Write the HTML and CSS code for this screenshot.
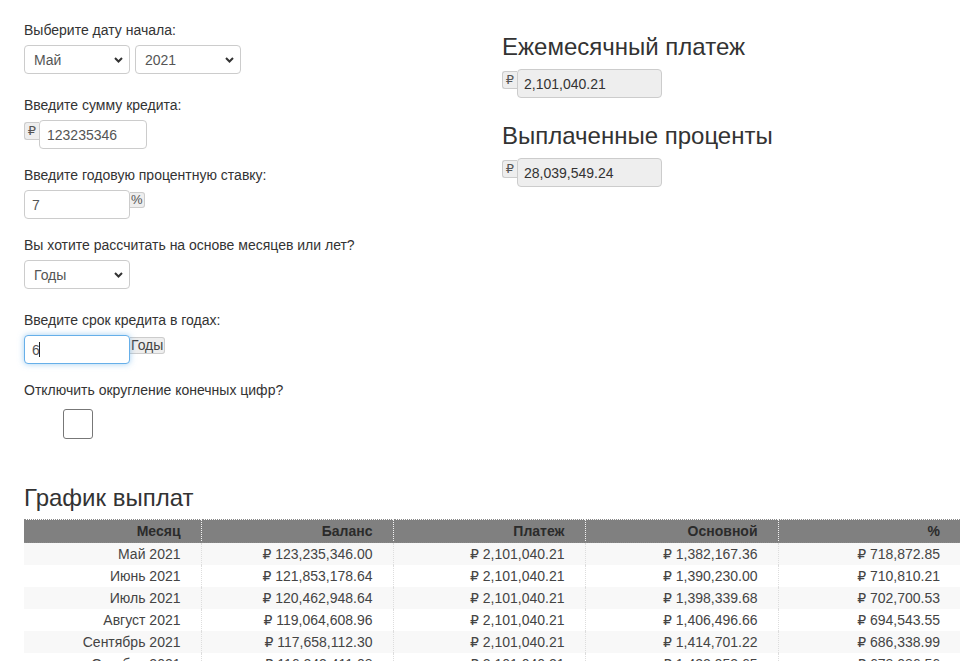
FILE: index.html
```html
<!DOCTYPE html>
<html lang="ru">
<head>
<meta charset="utf-8">
<title>Кредитный калькулятор</title>
<link rel="stylesheet" href="styles.css">
</head>
<body>
<div class="page">
  <div class="top">
    <div class="left">
      <div class="group gsel">
        <div class="lbl">Выберите дату начала:</div>
        <div class="fieldrow">
          <span class="selwrap"><select class="sel"><option>Май</option></select><svg class="chev" width="9" height="6" viewBox="0 0 9 6"><path d="M1 1 L4.5 4.5 L8 1" fill="none" stroke="#333" stroke-width="2"/></svg></span>
          <span class="selwrap"><select class="sel"><option>2021</option></select><svg class="chev" width="9" height="6" viewBox="0 0 9 6"><path d="M1 1 L4.5 4.5 L8 1" fill="none" stroke="#333" stroke-width="2"/></svg></span>
        </div>
      </div>
      <div class="group">
        <div class="lbl">Введите сумму кредита:</div>
        <div class="fieldrow">
          <span class="addon pre rub">₽</span><input class="inp w108" type="text" value="123235346">
        </div>
      </div>
      <div class="group">
        <div class="lbl">Введите годовую процентную ставку:</div>
        <div class="fieldrow">
          <input class="inp w106" type="text" value="7"><span class="addon post">%</span>
        </div>
      </div>
      <div class="group gsel">
        <div class="lbl">Вы хотите рассчитать на основе месяцев или лет?</div>
        <div class="fieldrow">
          <span class="selwrap"><select class="sel"><option>Годы</option></select><svg class="chev" width="9" height="6" viewBox="0 0 9 6"><path d="M1 1 L4.5 4.5 L8 1" fill="none" stroke="#333" stroke-width="2"/></svg></span>
        </div>
      </div>
      <div class="group">
        <div class="lbl">Введите срок кредита в годах:</div>
        <div class="fieldrow">
          <span class="caretwrap"><input class="inp w106 focus" type="text" value="6"><span class="caret"></span></span><span class="addon post words">Годы</span>
        </div>
      </div>
      <div class="group last">
        <div class="lbl chklbl">Отключить округление конечных цифр?</div>
        <div class="chk"></div>
      </div>
    </div>
    <div class="right">
      <h2 class="rh">Ежемесячный платеж</h2>
      <div class="fieldrow">
        <span class="addon pre rub">₽</span><input class="inp ro w145" type="text" value="2,101,040.21" readonly>
      </div>
      <h2 class="rh second">Выплаченные проценты</h2>
      <div class="fieldrow">
        <span class="addon pre rub">₽</span><input class="inp ro w145" type="text" value="28,039,549.24" readonly>
      </div>
    </div>
  </div>

  <h2 class="sched">График выплат</h2>
  <div class="tablewrap">
  <table class="tbl">
    <colgroup>
      <col class="c1"><col class="c2"><col class="c3"><col class="c4"><col class="c5">
    </colgroup>
    <thead>
      <tr><th>Месяц</th><th>Баланс</th><th>Платеж</th><th>Основной</th><th>%</th></tr>
    </thead>
    <tbody>
      <tr><td>Май 2021</td><td>₽ 123,235,346.00</td><td>₽ 2,101,040.21</td><td>₽ 1,382,167.36</td><td>₽ 718,872.85</td></tr>
      <tr><td>Июнь 2021</td><td>₽ 121,853,178.64</td><td>₽ 2,101,040.21</td><td>₽ 1,390,230.00</td><td>₽ 710,810.21</td></tr>
      <tr><td>Июль 2021</td><td>₽ 120,462,948.64</td><td>₽ 2,101,040.21</td><td>₽ 1,398,339.68</td><td>₽ 702,700.53</td></tr>
      <tr><td>Август 2021</td><td>₽ 119,064,608.96</td><td>₽ 2,101,040.21</td><td>₽ 1,406,496.66</td><td>₽ 694,543.55</td></tr>
      <tr><td>Сентябрь 2021</td><td>₽ 117,658,112.30</td><td>₽ 2,101,040.21</td><td>₽ 1,414,701.22</td><td>₽ 686,338.99</td></tr>
      <tr><td>Октябрь 2021</td><td>₽ 116,243,411.08</td><td>₽ 2,101,040.21</td><td>₽ 1,422,953.65</td><td>₽ 678,086.56</td></tr>
    </tbody>
  </table>
  </div>
</div>
</body>
</html>
```

FILE: styles.css
```css
html, body {
  margin: 0;
  padding: 0;
  background: #fff;
}
body {
  font-family: "Liberation Sans", Arial, "DejaVu Sans", sans-serif;
  font-size: 14px;
  line-height: 20px;
  color: #333;
}
.page {
  padding: 20px 19px 0 24px;
  height: 641px;
  overflow: hidden;
}
.top {
  display: grid;
  grid-template-columns: 478px 1fr;
}
.group {
  margin-bottom: 16px;
}
.group.gsel {
  margin-bottom: 21px;
}
.group.last {
  margin-bottom: 0;
}
.lbl {
  margin-bottom: 5px;
  color: #333;
}
.chklbl {
  margin-bottom: 9px;
}
.fieldrow {
  display: flex;
  align-items: flex-start;
  gap: 5px;
}
.fieldrow .addon + .inp,
.fieldrow .inp + .addon,
.fieldrow .caretwrap + .addon {
  margin-left: -5px;
}
.selwrap {
  position: relative;
  display: inline-block;
  width: 106px;
  height: 29px;
}
.sel {
  appearance: none;
  -webkit-appearance: none;
  box-sizing: border-box;
  width: 106px;
  height: 29px;
  margin: 0;
  padding: 0 20px 0 9px;
  border: 1px solid #ccc;
  border-radius: 4px;
  background: #fff;
  font-family: inherit;
  font-size: 14px;
  color: #555;
  outline: none;
}
.chev {
  position: absolute;
  right: 7px;
  top: 12px;
  pointer-events: none;
}
.inp {
  box-sizing: border-box;
  height: 29px;
  margin: 0;
  padding: 0 7px;
  border: 1px solid #ccc;
  border-radius: 4px;
  background: #fff;
  font-family: inherit;
  font-size: 14px;
  color: #555;
  outline: none;
}
.w106 { width: 106px; }
.w108 { width: 108px; }
.w145 { width: 145px; }
.inp.ro {
  background: #eee;
  color: #333;
  padding-left: 6px;
}
.inp.focus {
  border-color: #66afe9;
  box-shadow: 0 0 6px rgba(102, 175, 233, 0.6);
}
.caretwrap {
  position: relative;
  display: inline-block;
  height: 29px;
}
.caret {
  position: absolute;
  left: 15px;
  top: 7px;
  width: 1px;
  height: 15px;
  background: #222;
}
.addon {
  box-sizing: border-box;
  display: inline-block;
  background: #eee;
  border: 1px solid #ccc;
  color: #555;
  margin-top: 1px;
}
.addon.pre {
  border-right: 0;
  border-radius: 3px 0 0 3px;
}
.addon.post {
  border-left: 0;
  border-radius: 0 3px 3px 0;
  margin-top: 2px;
  height: 16px;
  padding: 0 1px;
  font-size: 13px;
  line-height: 14px;
}
.addon.rub {
  width: 15px;
  height: 18px;
  font-size: 13px;
  line-height: 16px;
  text-align: center;
  margin-top: 2px;
}
.addon.words {
  height: 17px;
  font-size: 14px;
  line-height: 15px;
  color: #444;
  padding: 0 1px;
}
.chk {
  box-sizing: border-box;
  width: 30px;
  height: 30px;
  margin-left: 39px;
  border: 1px solid #777;
  border-radius: 3px;
  background: #fff;
}
.right {
  padding-top: 14px;
}
.rh {
  margin: 0 0 9px;
  font-size: 24px;
  line-height: 26px;
  font-weight: normal;
  color: #333;
}
.rh.second {
  margin-top: 25px;
  margin-bottom: 9px;
}
.sched {
  margin: 46px 0 8px;
  font-size: 24px;
  line-height: 26px;
  font-weight: normal;
  color: #333;
}
.tablewrap {
  width: 936px;
}
.tbl {
  width: 936px;
  table-layout: fixed;
  border-collapse: collapse;
}
.c1 { width: 177px; }
.c2 { width: 192px; }
.c3 { width: 192px; }
.c4 { width: 193px; }
.c5 { width: 182px; }
.tbl th {
  background: #808080;
  color: #2b2b2b;
  font-weight: bold;
  font-size: 14px;
  text-align: right;
  height: 23px;
  padding: 0 20px 0 0;
  line-height: 21px;
  border-top: 1px dotted #898989;
  border-bottom: 1px dotted #898989;
  border-right: 1px dotted #f4f4f4;
  box-sizing: border-box;
}
.tbl th:last-child {
  border-right: 0;
}
.tbl td {
  height: 22px;
  padding: 0 20px 0 0;
  line-height: 22px;
  text-align: right;
  color: #444;
  border-right: 1px dotted #ddd;
  white-space: nowrap;
}
.tbl td:last-child {
  border-right: 0;
}
.tbl tbody tr:nth-child(odd) td {
  background: #f8f8f8;
}
.tbl tbody tr:nth-child(even) td {
  background: #fff;
}
```
